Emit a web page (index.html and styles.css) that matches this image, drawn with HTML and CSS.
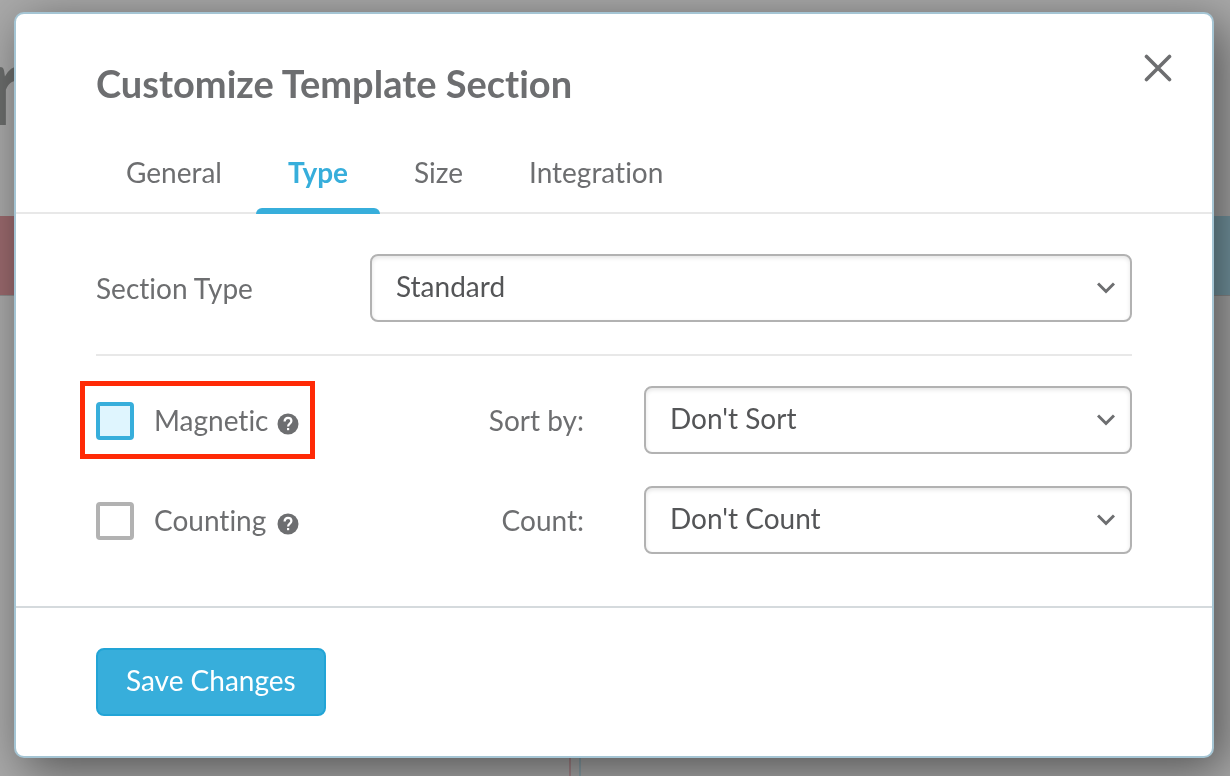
FILE: index.html
```html
<!DOCTYPE html>
<html lang="en">
<head>
<meta charset="utf-8">
<title>Customize Template Section</title>
<meta name="viewport" content="width=device-width, initial-scale=1">
<link rel="stylesheet" href="styles.css">
</head>
<body>
<div class="board" aria-hidden="true">
  <div class="board-title">r</div>
  <div class="board-columns">
    <div class="column column-red"><div class="column-head"></div></div>
    <div class="column column-teal"><div class="column-head"></div></div>
  </div>
</div>

<main class="overlay">
  <form class="modal" role="dialog" aria-labelledby="modal-title">
    <header class="modal-header">
      <h1 class="modal-title" id="modal-title">Customize Template Section</h1>
      <button class="close" type="button" aria-label="Close">
        <svg width="28" height="28" viewBox="0 0 28 28" fill="none" stroke="currentColor" stroke-width="3.6" stroke-linecap="round"><path d="M2.5 2.5l23 23M25.5 2.5l-23 23"/></svg>
      </button>
    </header>
    <nav class="tabs">
      <button class="tab" type="button">General</button>
      <button class="tab tab-active" type="button">Type</button>
      <button class="tab" type="button">Size</button>
      <button class="tab" type="button">Integration</button>
    </nav>
    <div class="modal-body">
      <div class="row row-type">
        <label for="section-type">Section Type</label>
        <div class="select-box">
          <select id="section-type"><option>Standard</option></select>
          <svg class="chevron" width="18" height="12" viewBox="0 0 18 12" fill="none" stroke="currentColor" stroke-width="3"><path d="M1 1.5l8 8 8-8"/></svg>
        </div>
      </div>
      <div class="row">
        <div class="option option-marked">
          <input class="check check-focus" type="checkbox" id="magnetic">
          <label class="option-label" for="magnetic">Magnetic</label>
          <svg class="help" width="22" height="22" viewBox="0 0 22 22"><circle cx="11" cy="11" r="10.5" fill="currentColor"/><path d="M7.6 8.4C7.6 6 9 4.8 11 4.8s3.4 1.3 3.4 3.2c0 2.5-3.3 2.7-3.3 5.4" fill="none" stroke="#fff" stroke-width="2.2"/><path d="M10 15h2.2v2.2H10z" fill="#fff"/></svg>
        </div>
        <label class="label-end" for="sort">Sort by:</label>
        <div class="select-box">
          <select id="sort"><option>Don't Sort</option></select>
          <svg class="chevron" width="18" height="12" viewBox="0 0 18 12" fill="none" stroke="currentColor" stroke-width="3"><path d="M1 1.5l8 8 8-8"/></svg>
        </div>
      </div>
      <div class="row">
        <div class="option">
          <input class="check" type="checkbox" id="counting">
          <label class="option-label" for="counting">Counting</label>
          <svg class="help" width="22" height="22" viewBox="0 0 22 22"><circle cx="11" cy="11" r="10.5" fill="currentColor"/><path d="M7.6 8.4C7.6 6 9 4.8 11 4.8s3.4 1.3 3.4 3.2c0 2.5-3.3 2.7-3.3 5.4" fill="none" stroke="#fff" stroke-width="2.2"/><path d="M10 15h2.2v2.2H10z" fill="#fff"/></svg>
        </div>
        <label class="label-end" for="count">Count:</label>
        <div class="select-box">
          <select id="count"><option>Don't Count</option></select>
          <svg class="chevron" width="18" height="12" viewBox="0 0 18 12" fill="none" stroke="currentColor" stroke-width="3"><path d="M1 1.5l8 8 8-8"/></svg>
        </div>
      </div>
    </div>
    <footer class="modal-footer">
      <button class="save" type="submit">Save Changes</button>
    </footer>
  </form>
</main>
</body>
</html>
```
FILE: styles.css
```css
* { box-sizing: border-box; }

body {
  margin: 0;
  color: #6d6e70;
  background: #a9a9a9;
  font: 28px/36px Lato, "Open Sans", sans-serif;
  font-variant-ligatures: none;
}

button, select { font: inherit; color: inherit; font-variant-ligatures: none; }

/* Dimmed board behind the dialog */
.board {
  position: fixed;
  inset: 0;
  display: flex;
  flex-direction: column;
  overflow: hidden;
}
.board-title {
  height: 216px;
  margin-left: -16px;
  padding-top: 22px;
  color: #6b6d6c;
  font-size: 112px;
  font-weight: 900;
  line-height: 120px;
}
.board-columns { flex: 1; display: flex; gap: 8px; }
.column { flex: 571; }
.column-red { border-right: 2px solid #a5868a; }
.column-teal { flex: 651; border-left: 2px solid #8aa0a8; }
.column-head { height: 80px; border-bottom: 1px solid #8d8d8d; }
.column-red .column-head { background: #9a696d; }
.column-teal .column-head { background: #7799a4; }

.overlay { position: relative; padding: 12px 16px 18px 14px; }

.modal {
  background: #fff;
  border: 2px solid #a5c5d4;
  border-radius: 10px;
  box-shadow: 10px 12px 48px rgba(0, 0, 0, .5);
}

.modal-header {
  display: flex;
  justify-content: space-between;
  align-items: flex-start;
  padding: 40px 40px 0 80px;
}
.modal-title { margin: 6px 0 0; font-size: 38px; line-height: 46px; font-weight: 700; }
.close { display: flex; padding: 0; border: 0; background: none; }

.tabs {
  display: flex;
  gap: 2px;
  margin-top: 28px;
  padding: 0 78px;
  border-bottom: 2px solid #e8e8e8;
}
.tab {
  height: 80px;
  margin-bottom: -2px;
  padding: 0 32px 4px;
  border: 0;
  background: none;
}
.tab-active {
  position: relative;
  color: #37aedb;
  font-weight: 700;
}
.tab-active::after {
  content: "";
  position: absolute;
  inset: auto 0 0;
  height: 6px;
  border-radius: 6px 6px 0 0;
  background: #37aedb;
}

.modal-body { display: grid; gap: 32px; padding: 40px 80px 52px; }
.row { display: grid; grid-template-columns: 274px 274px 1fr; align-items: center; }
.row-type {
  grid-template-columns: 274px 1fr;
  padding-bottom: 32px;
  margin-bottom: -2px;
  border-bottom: 2px solid #e8e8e8;
}
.label-end { padding-right: 60px; text-align: right; }

.select-box { position: relative; }
select {
  display: block;
  width: 100%;
  height: 68px;
  padding: 0 60px 4px 24px;
  border: 2px solid #b2b2b2;
  border-radius: 8px;
  background: #fff;
  box-shadow: inset 0 2px 4px rgba(0, 0, 0, .1);
  color: #545557;
  appearance: none;
}
.chevron {
  position: absolute;
  top: 28px;
  right: 17px;
  color: #6d6e70;
  pointer-events: none;
}

.option { position: relative; display: flex; align-items: center; justify-self: start; height: 38px; }
.option-label { min-width: 115px; }
.check {
  width: 38px;
  height: 38px;
  margin: 2px 20px 0 0;
  border: 4px solid #b2b2b2;
  border-radius: 4px;
  background: #fff;
  appearance: none;
}
.check-focus { border-color: #37aedb; background: #dff5fe; }
.help { margin: 8px 0 0 8px; }
.option-marked::after {
  content: "";
  position: absolute;
  inset: -20px -16px;
  border: 5px solid #ff2a06;
  pointer-events: none;
}

.modal-footer { padding: 40px 80px; border-top: 2px solid #d5dadd; }
.save {
  display: block;
  height: 68px;
  padding: 0 28px 4px;
  border: 2px solid #22a4d6;
  border-radius: 8px;
  background: #37aedb;
  color: #fff;
}
```
